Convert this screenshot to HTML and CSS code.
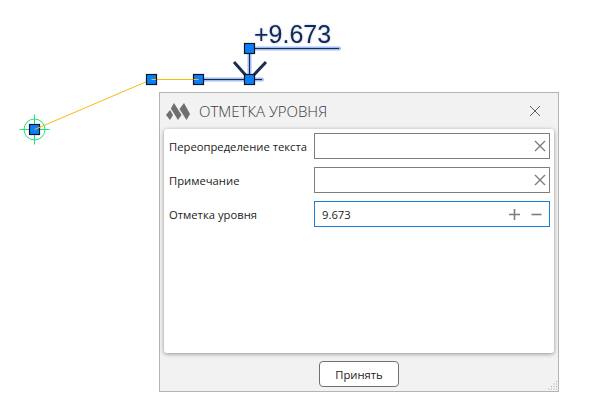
FILE: index.html
```html
<!DOCTYPE html>
<html lang="ru">
<head>
<meta charset="utf-8">
<title>Отметка уровня</title>
<link rel="stylesheet" href="styles.css">
</head>
<body>
<div class="canvas">
  <svg class="drawing" width="600" height="400" viewBox="0 0 600 400">
    <g class="glow">
      <path d="M249.500 48.500H339"/>
      <path d="M249.500 48.500V79.500"/>
      <path d="M198.500 79.500H262"/>
    </g>
    <g class="ink">
      <path d="M249.500 48.500H339"/>
      <path d="M249.500 48.500V79.500"/>
      <path d="M198.500 79.500H262"/>
    </g>
    <path class="arrow" d="M234 62L249.500 79.500L266 62"/>
    <text class="level" x="254" y="43">+9.673</text>
    <path class="leader" d="M34.500 129.500L151.500 79.500H198.500"/>
    <g class="snap">
      <circle cx="34.500" cy="129.500" r="10.500"/>
      <path d="M34.500 114.500V144.500M19.500 129.500H49.500"/>
    </g>
    <rect class="grip" x="29.500" y="124.500" width="10" height="10"/>
    <path class="leader" d="M34.500 129.500L42 126.300"/>
    <rect class="grip" x="146.500" y="74.500" width="10" height="10"/>
    <path class="leader" d="M151.500 79.500H156"/>
    <rect class="grip" x="193.500" y="74.500" width="10" height="10"/>
    <path class="leader" d="M193.500 79.500H198.500"/>
    <rect class="grip" x="244.500" y="43.500" width="10" height="10"/>
    <rect class="grip" x="244.500" y="74.500" width="10" height="10"/>
  </svg>

  <section class="dialog">
    <header class="titlebar">
      <svg class="logo" width="24" height="17" viewBox="0 0 24 17">
        <path d="M4 7L7 12L4 17L0 12Z"/>
        <path d="M8 0L15.500 12L12 17L4.800 5.500Z"/>
        <path d="M18 0L24 11L20.500 17L13.500 6Z"/>
      </svg>
      <h1 class="title">ОТМЕТКА УРОВНЯ</h1>
      <svg class="close" width="12" height="12" viewBox="0 0 12 12"><path d="M1 1L11 11M11 1L1 11"/></svg>
    </header>
    <div class="card">
      <div class="row">
        <label class="label">Переопределение текста</label>
        <div class="field">
          <span class="value"></span>
          <svg class="clear" width="12" height="12" viewBox="0 0 12 12"><path d="M1 1L11 11M11 1L1 11"/></svg>
        </div>
      </div>
      <div class="row">
        <label class="label">Примечание</label>
        <div class="field">
          <span class="value"></span>
          <svg class="clear" width="12" height="12" viewBox="0 0 12 12"><path d="M1 1L11 11M11 1L1 11"/></svg>
        </div>
      </div>
      <div class="row">
        <label class="label">Отметка уровня</label>
        <div class="field active">
          <span class="value">9.673</span>
          <svg class="step" width="11" height="11" viewBox="0 0 11 11"><path d="M0 5.500H11M5.500 0V11"/></svg>
          <svg class="step" width="11" height="11" viewBox="0 0 11 11"><path d="M0.500 5.500H10.500"/></svg>
        </div>
      </div>
    </div>
    <footer class="actions">
      <button class="accept" type="button">Принять</button>
      <svg class="resize" width="11" height="11" viewBox="0 0 11 11">
        <path d="M9 1h1v1H9zM9 3.500h1v1H9zM6.500 3.500h1v1h-1zM9 6h1v1H9zM6.500 6h1v1h-1zM4 6h1v1H4zM9 8.500h1v1H9zM6.500 8.500h1v1h-1zM4 8.500h1v1H4zM1.500 8.500h1v1h-1z"/>
      </svg>
    </footer>
  </section>
</div>
</body>
</html>
```
FILE: styles.css
```css
* { box-sizing: border-box; }
html, body { margin: 0; padding: 0; background: #fff; }
.canvas {
  position: relative;
  width: 600px;
  height: 400px;
  overflow: hidden;
  background: #fff;
  font-family: "Open Sans", "Noto Sans", sans-serif;
}
.drawing { position: absolute; left: 0; top: 0; display: block; }
.glow path { fill: none; stroke: #a2bdf6; stroke-width: 4; stroke-linecap: round; }
.ink path { fill: none; stroke: #1a2a4a; stroke-width: 1; }
.arrow { fill: none; stroke: #1d2d4d; stroke-width: 3; }
.level {
  font-family: "Liberation Sans", Arial, sans-serif;
  font-size: 25px;
  fill: #17284c;
  filter: drop-shadow(0 0 1px #a6c0f5);
}
.leader { fill: none; stroke: #fcb712; stroke-width: 1; }
.snap circle, .snap path { fill: none; stroke: #1fe27f; stroke-width: 1; }
.grip { fill: #0a80fb; stroke: #0b1420; stroke-width: 1.200; }

.dialog {
  position: absolute;
  left: 159px;
  top: 92px;
  width: 400px;
  height: 300px;
  display: flex;
  flex-direction: column;
  background: #f2f2f2;
  border: 1px solid #b4b4b4;
}
.titlebar {
  display: flex;
  align-items: center;
  height: 36px;
  padding: 0 17px 0 6px;
  flex: none;
}
.logo { flex: none; fill: #6f6f6f; }
.title {
  margin: 0 0 0 9px;
  flex: 1;
  font-size: 15px;
  font-weight: 300;
  color: #3a3a3a;
  letter-spacing: 0;
}
.close path { fill: none; stroke: #606060; stroke-width: 1; }
.card {
  flex: none;
  height: 224px;
  margin: 0 4px;
  padding: 4px 4px 0 5px;
  display: flex;
  flex-direction: column;
  gap: 8px;
  background: #fff;
  border-radius: 3px;
  box-shadow: 0 1px 4px rgba(0, 0, 0, 0.4);
}
.row { display: flex; align-items: center; height: 26px; }
.label {
  width: 145px;
  flex: none;
  font-size: 11.250px;
  color: #222;
  white-space: nowrap;
}
.field {
  flex: 1;
  height: 26px;
  display: flex;
  align-items: center;
  gap: 11px;
  padding: 0 3px 0 7px;
  background: #fff;
  border: 1px solid #7e7e7e;
}
.field.active { border-color: #1c7fd6; }
.value { flex: 1; font-size: 11.250px; color: #222; }
.clear path { fill: none; stroke: #7d7d7d; stroke-width: 1.400; }
.step path { fill: none; stroke: #7d7d7d; stroke-width: 1.600; }
.step:last-child { margin-right: 4px; }
.actions {
  position: relative;
  flex: 1;
  display: flex;
  justify-content: center;
  align-items: flex-start;
  padding-top: 8px;
}
.accept {
  width: 80px;
  height: 26px;
  padding: 0;
  font-family: inherit;
  font-size: 11.250px;
  color: #222;
  background: #fff;
  border: 1px solid #707070;
  border-radius: 4px;
}
.resize { position: absolute; right: 0; bottom: 0; fill: #9aa8c4; }
```
